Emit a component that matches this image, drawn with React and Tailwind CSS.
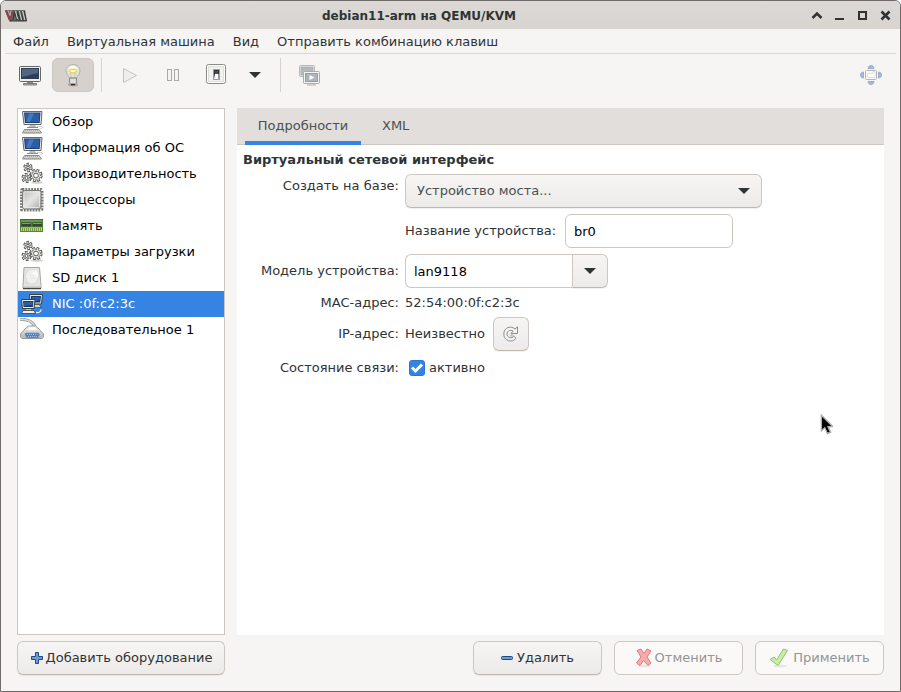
import { useState } from "react";

function ComputerIcon() {
  return (
    <svg width="24" height="24" viewBox="0 0 24 24">
      <path d="M2.500 1.500h19.500l-1 13H4z" fill="#eceee8" stroke="#666864" />
      <path d="M4 2.500h16.500l-.8 10.500H5z" fill="#1d3f78" />
      <path d="M5 3.500h14.500l-.6 8.500H5.800z" fill="#2c5ea8" />
      <path d="M9 3.500h5l-4 8.500H6.500z" fill="#4678bd" />
      <path d="M10 15h5l1.500 2.500h-8z" fill="#babdb6" />
      <path d="M7 17.500h11" stroke="#888a85" />
      <path d="M17 16.500c3 0 5.500-.5 5.500.8s-2 .7-3 1.700" fill="none" stroke="#c8cac5" />
      <path d="M4.500 19.500h14.500l2.500 3.500H2.500z" fill="#e4e5e1" stroke="#888a85" />
      <path d="M5 20.700h14M4 22.200h16" stroke="#777973" strokeDasharray="1.200 .8" strokeWidth=".7" />
    </svg>
  );
}

function Gear({ cx, cy, r, teeth, hub }) {
  const step = (2 * Math.PI * r) / teeth;
  return (
    <g fill="none">
      <circle cx={cx} cy={cy} r={r} stroke="#444643" strokeWidth="3.400" strokeDasharray={`${step * 0.62} ${step * 0.38}`} />
      <circle cx={cx} cy={cy} r={r - 0.4} fill="#e9eae6" stroke="#5c5e5a" strokeWidth="1" />
      <circle
        cx={cx}
        cy={cy}
        r={r}
        stroke="#e9eae6"
        strokeWidth="1.600"
        strokeDasharray={`${step * 0.36} ${step * 0.64}`}
        strokeDashoffset={-step * 0.13}
      />
      <circle cx={cx} cy={cy} r={hub} fill="#fff" stroke="#555753" strokeWidth="1" />
    </g>
  );
}

function GearsIcon() {
  return (
    <svg width="24" height="24" viewBox="0 0 24 24">
      <ellipse cx="17" cy="20.500" rx="6" ry="1.500" fill="#d3d3d1" />
      <Gear cx={16} cy={13.5} r={4.900} teeth={8} hub={2.400} />
      <Gear cx={8} cy={5.500} r={3} teeth={6} hub={1.300} />
      <Gear cx={6.500} cy={16} r={3.400} teeth={6} hub={1.500} />
    </svg>
  );
}

function ProcessorIcon() {
  return (
    <svg width="24" height="24" viewBox="0 0 24 24">
      <defs>
        <linearGradient id="chip" x1="0" y1="0" x2="1" y2="1">
          <stop offset="0" stopColor="#b8b8b6" />
          <stop offset=".5" stopColor="#e6e6e4" />
          <stop offset="1" stopColor="#a8a8a6" />
        </linearGradient>
      </defs>
      <rect x="1.500" y="1.500" width="20.500" height="20.500" rx="1" fill="none" stroke="#777975" strokeWidth="3" strokeDasharray="1.800 1.100" />
      <rect x="2.500" y="2.500" width="18.500" height="18.500" rx="2" fill="url(#chip)" stroke="#777975" />
      <rect x="4" y="4" width="15.500" height="15.500" rx="1" fill="none" stroke="#ecece9" strokeWidth=".8" />
    </svg>
  );
}

function MemoryIcon() {
  return (
    <svg width="24" height="24" viewBox="0 0 24 24">
      <path d="M0 5h23v13H0z" fill="#49852f" />
      <path d="M0 5.500h23" stroke="#3f6b3a" />
      <path d="M1 7h21" stroke="#7fb368" />
      <path d="M1.500 8.500h9.500v4H1.500zM12.500 8.500H22v4h-9.500z" fill="#3c403d" />
      <path d="M2 9.500h8.500M13 9.500h8.500" stroke="#8c8f8a" />
      <path d="M1 13.500h21" stroke="#8fc06c" />
      <path d="M1 15.500h21" stroke="#d2cf62" strokeWidth="3" strokeDasharray="1.300 .7" />
      <path d="M0 17.500h23" stroke="#6b7a3a" />
    </svg>
  );
}

function DiskIcon() {
  return (
    <svg width="24" height="24" viewBox="0 0 24 24">
      <path d="M4 1.500h15.500l1.500 18v3H3v-3z" fill="#e4e4e2" stroke="#a5a7a3" />
      <ellipse cx="12" cy="10.500" rx="6.500" ry="7.500" fill="#f0f0ef" stroke="#dadbd8" />
      <path d="M11 8l5-4c2 2 2.500 4 2 7z" fill="#fafafa" />
      <circle cx="12" cy="10.500" r="1.500" fill="#fff" stroke="#d2d3cf" strokeWidth=".6" />
      <path d="M5 16l4 3M3.500 20.500h17" stroke="#cfd0cc" />
      <path d="M3 22.500h18" stroke="#444643" strokeWidth="1.500" />
    </svg>
  );
}

function NetworkIcon() {
  return (
    <svg width="24" height="24" viewBox="0 0 24 24">
      <path d="M9.500 2.500h13l-1 9.500H10z" fill="#e6e7e2" stroke="#3d403b" />
      <path d="M11 4h10l-.8 6.500H11z" fill="#173a70" />
      <path d="M12 5h8l-.4 3.500L12 9.500z" fill="#2c5ea8" />
      <path d="M14 12.500h5l2.500 3H14z" fill="#d3d7cf" stroke="#3d403b" strokeWidth=".7" />
      <path d="M1.500 7.500h13.500l-1 9H2.500z" fill="#eeeeec" stroke="#3d403b" />
      <path d="M3 9h10.500l-.7 6H3.600z" fill="#173a70" />
      <path d="M4 10h8.500l-.4 3-8 1z" fill="#2c5ea8" />
      <path d="M6 17h5v1.500H6z" fill="#babdb6" />
      <path d="M3 18.500h11l1.500 3H1.500z" fill="#eeeeec" stroke="#3d403b" strokeWidth=".8" />
      <path d="M16 20.500c3 .5 5-1 5-3" fill="none" stroke="#eeeeec" strokeWidth="1.300" />
    </svg>
  );
}

function SerialIcon() {
  return (
    <svg width="24" height="24" viewBox="0 0 24 24">
      <defs>
        <linearGradient id="plug" x1="0" y1="0" x2="0" y2="1">
          <stop offset="0" stopColor="#f2f2f1" />
          <stop offset="1" stopColor="#b4b7b2" />
        </linearGradient>
      </defs>
      <path d="M0 1.500c7-.5 12 1 15 7" fill="none" stroke="#a0a29e" strokeWidth="3" />
      <path d="M0 1.500c7-.5 12 1 15 7" fill="none" stroke="#e0e1de" strokeWidth="1.300" />
      <path d="M8.500 8h7l3.500 3 4.500 5v3l-2 1.500H2L.5 19v-3L5 11z" fill="url(#plug)" stroke="#9a9c98" />
      <path d="M9 9.500h6l2.500 2.500h-11z" fill="#fff" />
      <path d="M5.500 15h13l1 1.500-1.500 3.500H7l-2-3.500z" fill="#5581b9" stroke="#7d95b4" strokeWidth=".8" />
      <path d="M7 16.500h10.500M8 18.500h9" stroke="#9fbbdf" strokeDasharray="1.200 .8" />
    </svg>
  );
}

function Triangle() {
  return (
    <svg width="12" height="6" viewBox="0 0 12 6" className="block">
      <path d="M0 0h12L6 6z" fill="#2e3436" />
    </svg>
  );
}

function LogoIcon() {
  return (
    <svg width="22" height="13" viewBox="0 0 22 13" className="block">
      <path d="M0 1h20l2 11H6L3.500 11z" fill="#6a6c68" />
      <path d="M.8 1.500L5 11l2.500-9" fill="none" stroke="#973c4a" strokeWidth="1.800" />
      <path d="M3 1.500l2 5 1-5" fill="none" stroke="#c9cbc6" strokeWidth=".8" />
      <path d="M8 11l1.500-8.500L12 11l.5-8.500 2.500 9" fill="none" stroke="#353936" strokeWidth="1.400" />
      <path d="M10.500 2l2 8M14.500 2l2 9M17.500 2l2.500 9" fill="none" stroke="#c9cbc6" strokeWidth="1.100" />
      <path d="M16 2l2.200 10M19.300 2l2 10M5 12h16.500" fill="none" stroke="#2e3436" strokeWidth="1" />
    </svg>
  );
}

function MonitorIcon() {
  return (
    <svg width="24" height="24" viewBox="0 0 24 24">
      <rect x="1.500" y="3.500" width="21" height="15" rx="1" fill="#eeeeec" stroke="#666864" />
      <path d="M3 5h18v11H3z" fill="#2e3e56" />
      <path d="M4 6h16v4L4 14z" fill="#526581" />
      <path d="M9 19h6v1.500H9z" fill="#888a85" />
      <path d="M5.500 20.500h13v1.500h-13z" fill="#babdb6" stroke="#666864" strokeWidth=".8" />
    </svg>
  );
}

function BulbIcon() {
  return (
    <svg width="24" height="24" viewBox="0 0 24 24">
      <ellipse cx="12" cy="21.800" rx="5" ry="1.500" fill="#7d7a76" opacity=".5" />
      <path d="M12 1.500c-4.500 0-7 3-7 6.500 0 3 2.500 4.500 3.500 7h7c1-2.500 3.500-4 3.500-7 0-3.500-2.500-6.500-7-6.500z" fill="#e2e2dc" stroke="#b3b3ac" />
      <path d="M8 5c2-3 6-3 8 0l1 2-2 3H9L7 7z" fill="#fdfcf0" />
      <path d="M8 6.500c.5 2.500 2.500 3.500 4 3.500s3.500-1 4-3.500M9 6.500h6" fill="none" stroke="#ecd74a" strokeWidth="1.300" />
      <path d="M9.500 10l1 5M14.500 10l-1 5" stroke="#c6c7c1" />
      <path d="M8.500 15h7v5l-2 2h-3l-2-2z" fill="#c9cac6" stroke="#777973" strokeWidth=".8" />
      <path d="M9 17h6M9 19h6" stroke="#f4f4f2" />
      <path d="M10 21.500h4" stroke="#2e3436" strokeWidth="1.500" />
    </svg>
  );
}

function PlayIcon() {
  return (
    <svg width="24" height="24" viewBox="0 0 24 24">
      <path d="M5.500 5.500v14L18.500 12.500z" fill="#eeeeec" stroke="#c3c4c1" />
    </svg>
  );
}

function PauseIcon() {
  return (
    <svg width="24" height="24" viewBox="0 0 24 24" fill="#f3f3f1" stroke="#a9aaa6">
      <rect x="6.500" y="6.500" width="4" height="11" />
      <rect x="13.500" y="6.500" width="4" height="11" />
    </svg>
  );
}

function PowerSwitchIcon() {
  return (
    <svg width="24" height="24" viewBox="0 0 24 24">
      <rect x="2.500" y="1.500" width="19" height="19" rx="2" fill="#fff" stroke="#888a85" />
      <rect x="4.500" y="3.500" width="15" height="15" fill="#f1f1ef" stroke="#dededb" />
      <path d="M9.500 6.500h6v10h-6z" fill="#2e3436" stroke="#9c9e9a" />
      <path d="M11 11h3.500v5H10z" fill="#fff" />
      <path d="M11 8h3v3h-3z" fill="#4a4d4a" />
    </svg>
  );
}

function ConsolesIcon() {
  return (
    <svg width="24" height="24" viewBox="0 0 24 24">
      <rect x="2.500" y="2.500" width="15" height="11" rx="1" fill="#eeeeec" stroke="#b7b9b5" />
      <rect x="4" y="4" width="12" height="8" fill="#b4b9bf" stroke="#a3a8ad" strokeWidth=".7" />
      <rect x="6.500" y="8.500" width="16" height="12" rx="1" fill="#f4f4f2" stroke="#aaaca8" />
      <rect x="8.500" y="10.500" width="12" height="8" fill="#aeb4ba" stroke="#989da2" />
      <path d="M12.500 12v5l5-2.500z" fill="#fff" />
      <path d="M10 22h9" stroke="#c3c4c1" strokeWidth="1.500" />
    </svg>
  );
}

function FullscreenIcon() {
  return (
    <svg width="24" height="24" viewBox="0 0 24 24">
      <g fill="#a5bbda" stroke="#8aa4c9" strokeWidth=".8">
        <path d="M9 5.500c0-2 1.500-3 3-3s3 1 3 3z" />
        <path d="M9 18.500c0 2 1.500 3 3 3s3-1 3-3z" />
        <path d="M4.500 9c-2 0-3 1.500-3 3s1 3 3 3z" />
        <path d="M19.500 9c2 0 3 1.500 3 3s-1 3-3 3z" />
      </g>
      <rect x="6.500" y="7.500" width="11" height="9" rx="1" fill="#fafaf9" stroke="#b5b6b2" />
      <path d="M8.500 10.500h5.500v-2h2v6H8.500z" fill="#fff" stroke="#dcdcd9" strokeWidth=".9" />
    </svg>
  );
}

const devices = [
  ["Обзор", ComputerIcon],
  ["Информация об ОС", ComputerIcon],
  ["Производительность", GearsIcon],
  ["Процессоры", ProcessorIcon],
  ["Память", MemoryIcon],
  ["Параметры загрузки", GearsIcon],
  ["SD диск 1", DiskIcon],
  ["NIC :0f:c2:3c", NetworkIcon],
  ["Последовательное 1", SerialIcon],
];

const raised =
  "border border-[#cdc7c2] border-b-[#bfb8b1] bg-linear-to-b from-[#f6f5f4] to-[#edebe9] shadow-[0_1px_1px_rgba(0,0,0,0.06)]";

function ToolButton({ label, className = "w-[42px]", disabled, children }) {
  return (
    <button
      type="button"
      aria-label={label}
      disabled={disabled}
      className={`flex h-[34px] items-center justify-center rounded-md ${className}`}
    >
      {children}
    </button>
  );
}

function ActionButton({ className, disabled, children }) {
  return (
    <button
      type="button"
      disabled={disabled}
      className={`flex h-[34px] items-center justify-center rounded-md ${
        disabled ? "border border-[#cdc7c2] bg-[#faf9f8] text-[#929595]" : raised
      } ${className}`}
    >
      {children}
    </button>
  );
}

function TitleBar() {
  return (
    <header className="flex h-7 items-center bg-linear-to-b from-[#dcd8d5] to-[#d8d4d0] px-1">
      <LogoIcon />
      <h1 className="flex-1 pt-0.5 text-center text-xs font-bold">debian11-arm на QEMU/KVM</h1>
      <div className="flex items-center gap-[11px] pr-1">
        <button type="button" aria-label="Свернуть в заголовок">
          <svg width="12" height="12" viewBox="0 0 12 12" className="block">
            <path d="M1.500 9L6 4.500 10.500 9" fill="none" stroke="#2e3436" strokeWidth="2.500" />
          </svg>
        </button>
        <button type="button" aria-label="Свернуть">
          <svg width="12" height="12" viewBox="0 0 12 12" className="block">
            <path d="M1 9h9v2H1z" fill="#2e3436" />
          </svg>
        </button>
        <button type="button" aria-label="Развернуть">
          <svg width="12" height="12" viewBox="0 0 12 12" className="block">
            <path d="M2 3h7v7H2z" fill="none" stroke="#2e3436" strokeWidth="2" />
          </svg>
        </button>
        <button type="button" aria-label="Закрыть">
          <svg width="12" height="12" viewBox="0 0 12 12" className="block">
            <path d="M1.500 2.500l8 8M9.500 2.500l-8 8" stroke="#2e3436" strokeWidth="2.600" />
          </svg>
        </button>
      </div>
    </header>
  );
}

function Toolbar() {
  return (
    <div className="flex items-center px-2 py-1">
      <ToolButton label="Консоль">
        <MonitorIcon />
      </ToolButton>
      <ToolButton label="Сведения" className="ml-px w-[42px] border border-[#cdc7c2] bg-[#d6d1cd]">
        <BulbIcon />
      </ToolButton>
      <div className="mx-[7px] h-[34px] w-px bg-[#d5d2cf]" />
      <ToolButton label="Запустить" disabled>
        <PlayIcon />
      </ToolButton>
      <ToolButton label="Приостановить" className="ml-px w-[42px]">
        <PauseIcon />
      </ToolButton>
      <ToolButton label="Выключить" className="ml-px w-[42px]">
        <PowerSwitchIcon />
      </ToolButton>
      <ToolButton label="Меню выключения" className="w-9">
        <Triangle />
      </ToolButton>
      <div className="mx-[7px] h-[34px] w-px bg-[#d5d2cf]" />
      <ToolButton label="Снимки" disabled>
        <ConsolesIcon />
      </ToolButton>
      <ToolButton label="Полный экран" className="ml-auto w-[42px]">
        <FullscreenIcon />
      </ToolButton>
    </div>
  );
}

function Details() {
  const [active, setActive] = useState(true);
  return (
    <div className="px-1.5 pt-1">
      <h2 className="mb-1 text-[13px] leading-[21px] font-bold">Виртуальный сетевой интерфейс</h2>
      <div className="grid grid-cols-[156px_1fr] items-center gap-1.5">
        <label htmlFor="source" className="self-start text-right leading-6">
          Создать на базе:
        </label>
        <div className="relative w-full max-w-[357px]">
          <select
            id="source"
            className={`h-[34px] w-full appearance-none rounded-md pr-8 pl-[11px] text-[#4b5052] ${raised}`}
          >
            <option>Устройство моста...</option>
          </select>
          <span className="pointer-events-none absolute inset-y-0 right-3 flex items-center">
            <Triangle />
          </span>
        </div>

        <div className="col-start-2 flex items-center gap-1.5">
          <label htmlFor="bridge" className="w-[154px] whitespace-nowrap">
            Название устройства:
          </label>
          <input
            id="bridge"
            defaultValue="br0"
            className="h-[34px] w-[168px] rounded-md border border-[#cdc7c2] bg-white px-2 text-black"
          />
        </div>

        <label htmlFor="model" className="text-right">
          Модель устройства:
        </label>
        <div className="flex">
          <input
            id="model"
            defaultValue="lan9118"
            className="h-[34px] w-[167px] rounded-l-md border border-r-0 border-[#cdc7c2] bg-white px-2 text-black"
          />
          <button
            type="button"
            aria-label="Выбрать модель"
            className={`flex h-[34px] w-9 items-center justify-center rounded-r-md ${raised}`}
          >
            <Triangle />
          </button>
        </div>

        <span className="text-right leading-[17px]">MAC-адрес:</span>
        <span className="leading-[17px]">52:54:00:0f:c2:3c</span>

        <span className="text-right">IP-адрес:</span>
        <div className="flex items-center">
          <span className="w-[88px]">Неизвестно</span>
          <button
            type="button"
            aria-label="Обновить"
            className={`flex h-[34px] w-9 items-center justify-center rounded-md ${raised}`}
          >
            <svg width="16" height="16" viewBox="0 0 16 16">
              <path
                d="M12 3L14.500.8V7.500H8L10.200 5C7.800 3.600 4 4.500 4 8c0 3.800 4.800 5 6.800 2.300L13 12.200C9.500 17.500.8 15 .8 8 .8 1.500 7.800-.8 12 3z"
                fill="#f4f4f2"
                stroke="#8b8d8a"
              />
              <path d="M10 7.500L7.500 10h4" fill="none" stroke="#a9aaa6" />
            </svg>
          </button>
        </div>

        <span className="text-right">Состояние связи:</span>
        <label className="flex h-[22px] items-center gap-1 pl-1">
          <input
            type="checkbox"
            checked={active}
            onChange={(e) => setActive(e.target.checked)}
            className="peer sr-only"
          />
          <span className="flex size-4 items-center justify-center rounded-[3px] border border-[#2a76d2] bg-[#3584e4]">
            {active && (
              <svg width="14" height="14" viewBox="0 0 14 14">
                <path d="M2 6.500l3.500 3.500L12 3.500" fill="none" stroke="#fff" strokeWidth="3" />
              </svg>
            )}
          </span>
          активно
        </label>
      </div>
    </div>
  );
}

export default function App() {
  const [selected, setSelected] = useState(7);
  return (
    <div className="relative flex min-h-screen flex-col overflow-hidden rounded-t-md border border-[#6f6b69] bg-[#f6f5f4] font-['DejaVu_Sans',sans-serif] text-[13px] leading-[18px] text-[#2e3436]">
      <TitleBar />
      <nav className="mx-1 flex h-[25px] items-center gap-[18px] border-b border-[#d9d6d3] px-2 pt-px whitespace-nowrap">
        <button type="button">Файл</button>
        <button type="button">Виртуальная машина</button>
        <button type="button">Вид</button>
        <button type="button">Отправить комбинацию клавиш</button>
      </nav>
      <Toolbar />

      <main className="flex flex-1 gap-3 px-4 pt-3">
        <ul className="w-52 shrink-0 border border-[#cdc7c2] bg-white text-black">
          {devices.map(([name, Icon], i) => (
            <li key={name}>
              <button
                type="button"
                onClick={() => setSelected(i)}
                className={`flex h-[26px] w-full items-center gap-2 pl-0.5 text-left ${
                  i === selected ? "bg-[#3584e4] text-white" : ""
                }`}
              >
                <Icon />
                {name}
              </button>
            </li>
          ))}
        </ul>

        <section className="min-w-0 flex-1 bg-white">
          <div role="tablist" className="flex h-[37px] border-b border-[#cdc7c2] bg-[#e1dedb] px-2">
            <button
              type="button"
              role="tab"
              aria-selected="true"
              className="-mb-px w-[116px] border-b-4 border-[#3584e4] pt-0.5 text-[#4b5052]"
            >
              Подробности
            </button>
            <button type="button" role="tab" aria-selected="false" className="ml-2 px-[13px] text-[#4b5052]">
              XML
            </button>
          </div>
          <Details />
        </section>
      </main>

      <footer className="flex gap-3 px-4 pt-1.5 pb-4">
        <ActionButton className="w-52 gap-0.5">
          <svg width="14" height="14" viewBox="0 0 14 14">
            <path d="M5.500 1.500h3v4h4v3h-4v4h-3v-4h-4v-3h4z" fill="#6f9bd2" stroke="#204a87" strokeLinejoin="round" />
          </svg>
          Добавить оборудование
        </ActionButton>
        <ActionButton className="ml-auto w-[129px] gap-1">
          <svg width="12" height="12" viewBox="0 0 12 12">
            <rect x=".5" y="4.500" width="11" height="3" rx="1" fill="#6f9bd2" stroke="#204a87" />
          </svg>
          Удалить
        </ActionButton>
        <ActionButton className="w-[129px] gap-0.5" disabled>
          <svg width="18" height="20" viewBox="0 0 18 20">
            <ellipse cx="9" cy="18" rx="6" ry="1.500" fill="#e9e7e5" />
            <path
              d="M2 2.500l4-1.500 3 4.500L12 1l4 2-4 6 4 6-3 2.500-4.500-5-3.500 5-3.500-2.500L6 9z"
              fill="#f6acac"
              stroke="#e07b7b"
              strokeLinejoin="round"
            />
          </svg>
          Отменить
        </ActionButton>
        <ActionButton className="w-[129px] gap-1" disabled>
          <svg width="20" height="20" viewBox="0 0 20 20">
            <ellipse cx="11" cy="18" rx="7" ry="1.500" fill="#e9e7e5" />
            <path d="M1 11.500l4-2.500 2.500 3L14.500 1l4 1.500-9.500 15z" fill="#c8ecaa" stroke="#8fc46a" strokeLinejoin="round" />
          </svg>
          Применить
        </ActionButton>
      </footer>

      <svg className="pointer-events-none absolute top-[413px] left-[819px]" width="13" height="22" viewBox="0 0 13 22">
        <path d="M1.500 1.500v15l3.500-3 2.500 6 3-1.300L8 12.500h4.500z" fill="#000" stroke="#aaa" strokeWidth="1.600" />
        <path d="M2 3v12l3-2.500 2.500 5.500 1.200-.6L6.500 12H11z" fill="#000" />
      </svg>
    </div>
  );
}
